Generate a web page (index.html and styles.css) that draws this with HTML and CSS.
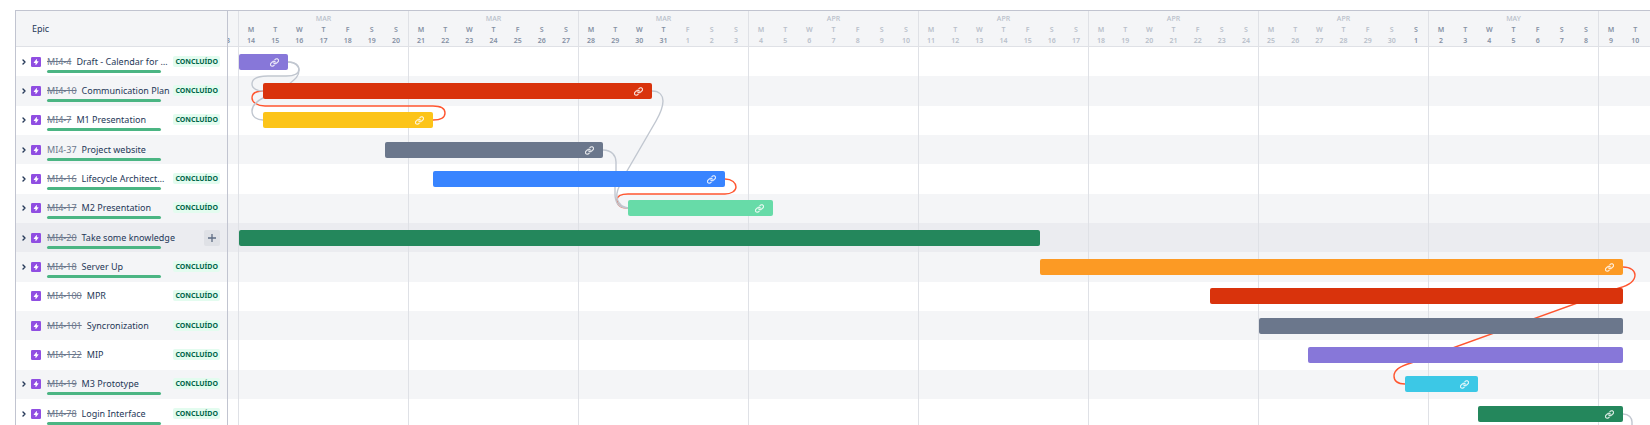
FILE: index.html
```html
<!DOCTYPE html>
<html lang="pt">
<head>
<meta charset="utf-8">
<title>Roadmap</title>
<link rel="stylesheet" href="styles.css">
</head>
<body>
<svg class="defs" aria-hidden="true">
  <symbol id="chevron" viewBox="0 0 6 8"><path d="M2 2 4 4 2 6" fill="none" stroke="currentColor" stroke-width="1.4" stroke-linecap="round" stroke-linejoin="round"/></symbol>
  <symbol id="epic" viewBox="0 0 16 16"><rect width="16" height="16" rx="2" fill="#904ee2"/><path d="M8.9 3.2 4.4 8.6c-.3.3-.1.8.4.8h2.4v3.1c0 .5.5.6.8.3l3.9-5.1c.3-.4.1-.9-.4-.9H9.4V3.4c0-.3-.3-.4-.5-.2z" fill="#fff"/></symbol>
  <symbol id="link" viewBox="3 3.5 18 18"><g fill="currentColor" stroke="currentColor" stroke-width=".4"><path d="M12.856 5.457l-.937.92a1.002 1.002 0 0 0 0 1.437 1.047 1.047 0 0 0 1.463 0l.984-.966c.967-.95 2.542-1.135 3.602-.288a2.54 2.54 0 0 1 .203 3.81l-2.903 2.852a2.646 2.646 0 0 1-3.696 0l-1.11-1.09L9 13.57l1.108 1.089c1.822 1.788 4.802 1.788 6.622 0l2.905-2.852a4.558 4.558 0 0 0-.357-6.82c-1.893-1.517-4.695-1.226-6.422.47"/><path d="M11.144 19.543l.937-.92a1.002 1.002 0 0 0 0-1.437 1.047 1.047 0 0 0-1.462 0l-.985.966c-.967.95-2.542 1.135-3.602.288a2.54 2.54 0 0 1-.203-3.81l2.903-2.852a2.646 2.646 0 0 1 3.696 0l1.11 1.09L15 11.43l-1.108-1.089c-1.822-1.788-4.802-1.788-6.622 0l-2.905 2.852a4.558 4.558 0 0 0 .357 6.82c1.893 1.517 4.695 1.226 6.422-.47"/></g></symbol>
  <symbol id="plus" viewBox="0 0 8 8"><path d="M4 0v8M0 4h8" stroke="currentColor" stroke-width="1.3"/></symbol>
</svg>
<main class="board">
  <section class="sidebar">
    <header class="head side-head">Epic</header>
    <div class="rows" id="epics"></div>
  </section>
  <section class="timeline">
    <header class="head weeks" id="weeks"></header>
    <div class="chart">
      <div class="rows" id="bars"></div>
      <div class="lines" id="lines"></div>
      <svg class="links" aria-hidden="true"><g transform="translate(-228 -47)">
        <path d="M433 120C441 120 445 117 445 113C445 108 440 106 433 106H265C257 106 252 102 252 98C252 93 257 91 263 91" class="late"/>
        <path d="M725 179C732 179 736 183 736 187C736 191 731 194 725 194H628C620 194 617 197 617 200C617 205 621 208 628 208" class="late"/>
        <path d="M1623 267C1631 267 1635 271 1635 275C1635 280 1630 285 1619 288L1411 363C1400 366 1394 370 1394 376C1394 382 1398 384 1405 384" class="late"/>
        <path d="M288 62C296 62 299 66 299 69C299 74 293 76 286 76H268C257 76 252 79 252 84C252 89 258 91 263 91"/>
        <path d="M288 62C296 62 299 67 299 70C299 77 294 80 289 84L263 98C255 102 252 106 252 111C252 117 257 120 263 120"/>
        <path d="M652 91C660 91 663 96 663 101C663 107 660 114 656 121L627 171L619 187C615 195 616 206 628 208"/>
        <path d="M603 150C612 150 616 156 616 162V171L615 187V194C615 203 619 208 628 208"/>
        <path d="M1623 414C1629 414 1632 418 1632 422V430"/>
      </g></svg>
    </div>
  </section>
</main>
<script src="app.js"></script>
</body>
</html>
```
FILE: styles.css
```css
* { box-sizing: border-box; }
body {
  margin: 0;
  padding: 10px 0 0 15px;
  height: 100vh;
  overflow: hidden;
  background: #fff;
  color: #253858;
  font: 9px/12px "Noto Sans", "Open Sans", sans-serif;
}
button { border: 0; padding: 0; background: none; color: inherit; font: inherit; display: flex; align-items: center; justify-content: center; }
.defs { position: absolute; width: 0; height: 0; }
.board {
  display: grid;
  grid-template-columns: 213px minmax(0, 1fr);
  height: 100%;
  overflow: hidden;
  border-top: 1px solid #c1c4d0;
}
.sidebar { border: solid #c1c4d0; border-width: 0 1px; }
.head { height: 36px; background: #f4f5f7; border-bottom: 1px solid #dfe1e6; }
.side-head { padding: 12px 16px; }

.row { height: 29px; display: flex; padding-top: 7px; }
.row:nth-child(3n) { padding-top: 6px; }
.row:nth-child(3n + 2) { height: 30px; }
.row:nth-child(even) { background: #f4f5f7; }
.row.hovered { background: #ebecf0; }

.epic { padding-right: 7px; gap: 2px; }
.toggle { width: 15px; height: 16px; flex: none; }
.toggle svg { width: 6px; height: 8px; }
.type { width: 10px; height: 10px; margin: 3px 4px 0 -2px; flex: none; }
.main { flex: 1; min-width: 0; }
.name { display: flex; gap: 5px; height: 16px; line-height: 16px; white-space: nowrap; }
.key { color: #6b778c; text-decoration: none; }
.key.done { text-decoration: line-through; }
.progress { width: 114px; height: 3px; border-radius: 2px; background: #4bb583; }
.status {
  height: 11px; margin-top: 2px; padding: 0 2px; flex: none;
  border-radius: 2px; background: #e3fcef; color: #00664a;
  font-size: 7px; line-height: 11px; font-weight: 700; text-transform: uppercase;
}
.add { width: 16px; height: 16px; flex: none; border-radius: 2px; background: #dfe1e6; color: #5e6c84; }
.add svg { width: 8px; height: 8px; }

.timeline { overflow: hidden; }
.weeks, .lines { display: flex; overflow: hidden; }
.week { flex: none; width: 170px; border-left: 1px solid #dfe1e6; }
.week.partial { width: 10px; border: 0; display: flex; flex-direction: column; align-items: flex-end; }
.weeks .week { padding-top: 2px; font-size: 7px; line-height: 11px; text-align: center; color: #b8bfca; }
.month { height: 11px; font-weight: 500; }
.days { display: grid; grid-template-columns: repeat(7, 1fr); }
.partial .days { grid-template-columns: 24px; }
.day { display: flex; flex-direction: column; font-weight: 600; }
.day.strong { color: #8490a3; }

.chart { position: relative; }
.lines, .links { position: absolute; inset: 0; width: 100%; height: 100%; }
.links { overflow: hidden; fill: none; stroke: #c1c7d0; stroke-width: 1.4; }
.links .late { stroke: #ff5630; }
.bar {
  position: relative; z-index: 1; flex: none; height: 16px; padding-right: 9px;
  display: flex; align-items: center; justify-content: flex-end;
  border-radius: 2px; color: #fff;
}
.bar svg { width: 9px; height: 9px; opacity: .85; }
.purple { background: #8777d9; }
.red { background: #d9330c; }
.yellow { background: #fcc419; }
.slate { background: #6b778c; }
.blue { background: #3884ff; }
.mint { background: #67dba8; }
.green { background: #24875c; }
.orange { background: #fc9a24; }
.cyan { background: #3cc8e6; }
```
FILE: app.js
```js
const TIMELINE_START = 228;
// key, title, bar start, bar end, colour, options: c children, d status, l links, o key not struck, h hovered
const epics = [
  ["MI4-4", "Draft - Calendar for …", 239, 288, "purple", "cdl"],
  ["MI4-10", "Communication Plan", 263, 652, "red", "cdl"],
  ["MI4-7", "M1 Presentation", 263, 433, "yellow", "cdl"],
  ["MI4-37", "Project website", 385, 603, "slate", "clo"],
  ["MI4-16", "Lifecycle Architect…", 433, 725, "blue", "cdl"],
  ["MI4-17", "M2 Presentation", 628, 773, "mint", "cdl"],
  ["MI4-20", "Take some knowledge", 239, 1040, "green", "ch"],
  ["MI4-18", "Server Up", 1040, 1623, "orange", "cdl"],
  ["MI4-100", "MPR", 1210, 1623, "red", "d"],
  ["MI4-101", "Syncronization", 1259, 1623, "slate", "d"],
  ["MI4-122", "MIP", 1308, 1623, "purple", "d"],
  ["MI4-19", "M3 Prototype", 1405, 1478, "cyan", "cdl"],
  ["MI4-78", "Login Interface", 1478, 1623, "green", "cdl"]
];
const icon = (id, cls = "") => `<svg class="${cls}" aria-hidden="true"><use href="#${id}"/></svg>`;

document.getElementById("epics").innerHTML = epics.map(([key, title, , , , o]) => `
<div class="row epic${o.includes("h") ? " hovered" : ""}">
  ${o.includes("c") ? `<button class="toggle" aria-label="Expand ${key}">${icon("chevron")}</button>` : `<span class="toggle"></span>`}
  ${icon("epic", "type")}
  <div class="main">
    <div class="name"><a class="key${o.includes("o") ? "" : " done"}" href="#${key}">${key}</a><span class="title">${title}</span></div>
    ${o.includes("c") ? `<div class="progress"></div>` : ""}
  </div>
  ${o.includes("d") ? `<span class="status">Concluído</span>` : ""}
  ${o.includes("h") ? `<button class="add" aria-label="Add child issue">${icon("plus")}</button>` : ""}
</div>`).join("");

document.getElementById("bars").innerHTML = epics.map(([, , start, end, colour, o]) => `
<div class="row${o.includes("h") ? " hovered" : ""}"><div class="bar ${colour}" style="margin-left:${start - TIMELINE_START}px;width:${end - start}px">${o.includes("l") ? icon("link") : ""}</div></div>`).join("");

const first = new Date(Date.UTC(2022, 2, 14));
const dayCell = offset => {
  const date = new Date(first.getTime() + offset * 864e5);
  return `<div class="day${date.getUTCMonth() === 3 ? "" : " strong"}"><span>${"SMTWTFS"[date.getUTCDay()]}</span><span>${date.getUTCDate()}</span></div>`;
};
const months = ["MAR", "MAR", "MAR", "APR", "APR", "APR", "APR", "MAY", "MAY"];
document.getElementById("weeks").innerHTML =
  `<div class="week partial"><div class="month"></div><div class="days">${dayCell(-1)}</div></div>` +
  months.map((m, w) => `<div class="week"><div class="month">${m}</div><div class="days">${[0, 1, 2, 3, 4, 5, 6].map(d => dayCell(w * 7 + d)).join("")}</div></div>`).join("");
document.getElementById("lines").innerHTML = `<div class="week partial"></div>` + months.map(() => `<div class="week"></div>`).join("");
```
